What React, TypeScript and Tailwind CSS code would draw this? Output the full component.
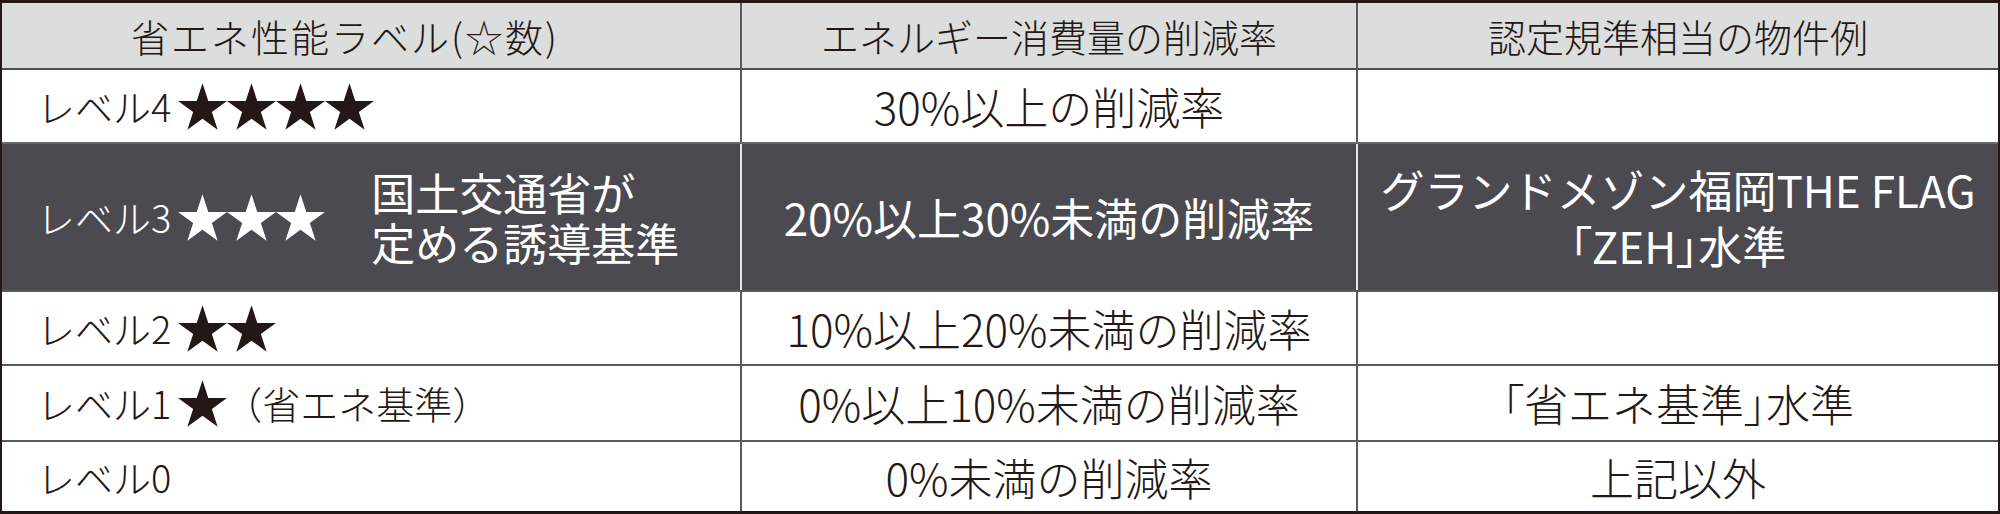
import React from "react";

const FONT = { fontFamily: '"Noto Sans CJK JP", "Noto Sans", sans-serif' };

function Star({ color }: { color: string }) {
  return (
    <svg width="49" height="47" viewBox="0 0 100 95.1" className="block shrink-0">
      <polygon
        points="50,0 61.8,36.3 100,36.3 69.1,58.8 80.9,95.1 50,72.6 19.1,95.1 30.9,58.8 0,36.3 38.2,36.3"
        fill={color}
      />
    </svg>
  );
}

function Stars({ n, color }: { n: number; color: string }) {
  return (
    <div className="flex ml-[7px]">
      {Array.from({ length: n }).map((_, i) => (
        <Star key={i} color={color} />
      ))}
    </div>
  );
}

function B({ children }: { children: React.ReactNode }) {
  return <span className="[font-feature-settings:'palt']">{children}</span>;
}

export default function App() {
  return (
    <div style={FONT} className="w-[2000px] h-[514px] bg-white text-[#231815]">
      <div className="w-[2000px] h-[514px] flex flex-col border-x-2 border-t-[3px] border-b-[3px] border-[#231815]">
        {/* header */}
        <div className="h-[65px] flex bg-[#dcdddd] text-[38px] font-light leading-none">
          <div className="w-[738px] flex items-center pl-[129px] tracking-[2px]">省エネ性能ラベル(☆数)</div>
          <div className="w-[616px] border-l-2 border-[#5a5a5c] flex items-center justify-center">エネルギー消費量の削減率</div>
          <div className="flex-1 border-l-2 border-[#5a5a5c] flex items-center justify-center">認定規準相当の物件例</div>
        </div>

        {/* level 4 */}
        <div className="h-[74px] flex border-t-2 border-[#4e4e50] bg-white font-light">
          <div className="w-[738px] flex items-center pl-[35px] text-[38px] leading-none">
            <span>レベル4</span>
            <Stars n={4} color="#231815" />
          </div>
          <div className="w-[616px] border-l-2 border-[#5a5a5c] flex items-center justify-center text-[44px] leading-none">30%以上の削減率</div>
          <div className="flex-1 border-l-2 border-[#5a5a5c]"></div>
        </div>

        {/* level 3 */}
        <div className="h-[148px] flex border-t-2 border-[#6d6466] bg-[#4c4a51] text-white">
          <div className="w-[738px] flex items-center pl-[35px]">
            <span className="text-[38px] leading-none font-light">レベル3</span>
            <Stars n={3} color="#ffffff" />
            <div className="ml-[46px] flex flex-col text-[44px] leading-[50px]">
              <span>国土交通省が</span>
              <span>定める誘導基準</span>
            </div>
          </div>
          <div className="w-[616px] border-l-2 border-[#e6e6e6] flex items-center justify-center text-[44px] leading-none">20%以上30%未満の削減率</div>
          <div className="flex-1 border-l-2 border-[#e6e6e6] flex flex-col items-center justify-center text-[44px] leading-[56px] text-center">
            <span>グランドメゾン福岡THE FLAG</span>
            <span>
              <B>「</B>ZEH<B>」</B>水準
            </span>
          </div>
        </div>

        {/* level 2 */}
        <div className="h-[74px] flex border-t-2 border-[#5a5a5c] bg-white font-light">
          <div className="w-[738px] flex items-center pl-[35px] text-[38px] leading-none">
            <span>レベル2</span>
            <Stars n={2} color="#231815" />
          </div>
          <div className="w-[616px] border-l-2 border-[#5a5a5c] flex items-center justify-center text-[44px] leading-none">10%以上20%未満の削減率</div>
          <div className="flex-1 border-l-2 border-[#5a5a5c]"></div>
        </div>

        {/* level 1 */}
        <div className="h-[76px] flex border-t-2 border-[#5a5a5c] bg-white font-light">
          <div className="w-[738px] flex items-center pl-[35px] text-[38px] leading-none">
            <span>レベル1</span>
            <Stars n={1} color="#231815" />
            <span className="-ml-[3px]">（省エネ基準）</span>
          </div>
          <div className="w-[616px] border-l-2 border-[#5a5a5c] flex items-center justify-center text-[44px] leading-none">0%以上10%未満の削減率</div>
          <div className="flex-1 border-l-2 border-[#5a5a5c] flex items-center justify-center text-[44px] leading-none">
            <span>
              <B>「</B>省エネ基準<B>」</B>水準
            </span>
          </div>
        </div>

        {/* level 0 */}
        <div className="h-[71px] flex border-t-2 border-[#5a5a5c] bg-white font-light">
          <div className="w-[738px] flex items-center pl-[35px] text-[38px] leading-none">
            <span>レベル0</span>
          </div>
          <div className="w-[616px] border-l-2 border-[#5a5a5c] flex items-center justify-center text-[44px] leading-none">0%未満の削減率</div>
          <div className="flex-1 border-l-2 border-[#5a5a5c] flex items-center justify-center text-[44px] leading-none">上記以外</div>
        </div>
      </div>
    </div>
  );
}
